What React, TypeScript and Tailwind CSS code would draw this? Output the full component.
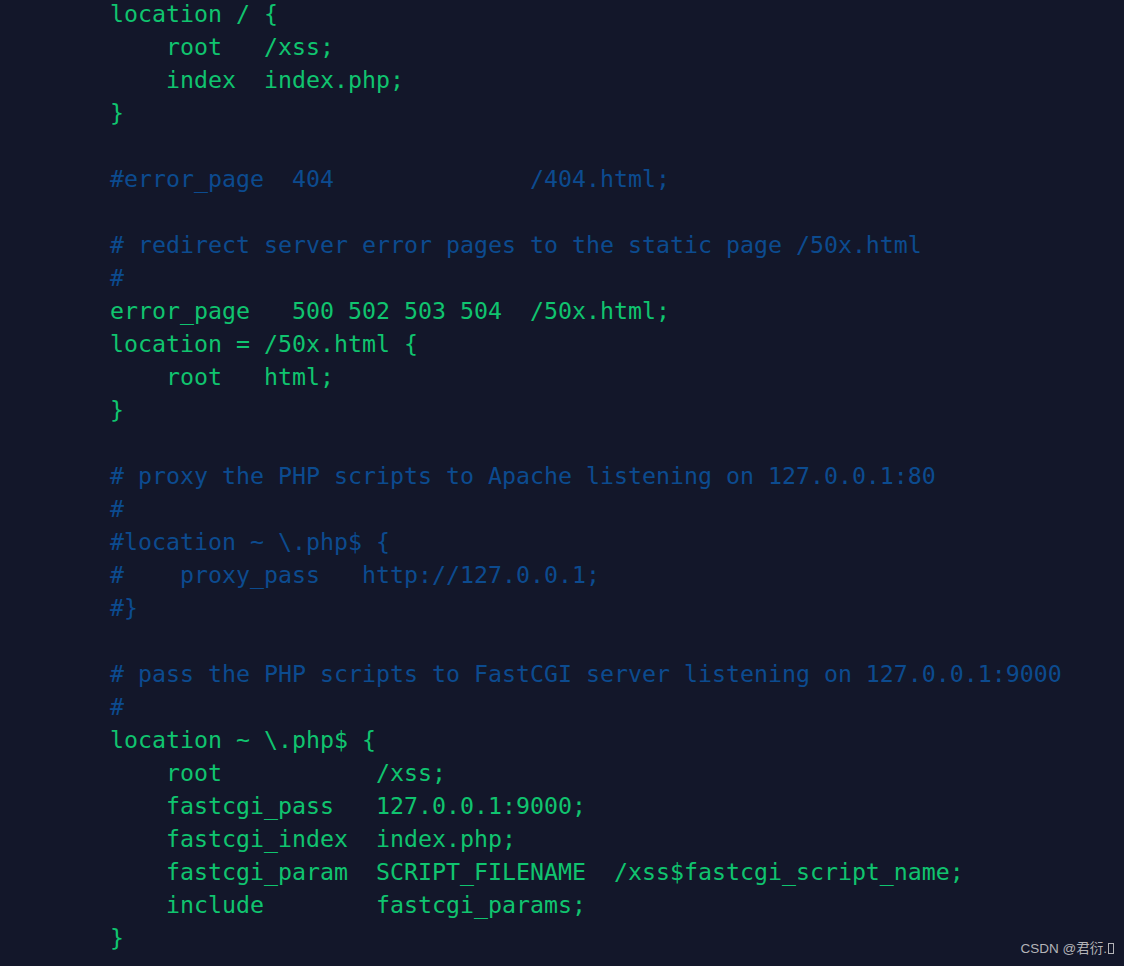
import React from "react";

const G = "text-[#10c46f]";
const C = "text-[#0c4b8f]";

const lines: [string, string][] = [
  ["location / {", G],
  ["    root   /xss;", G],
  ["    index  index.php;", G],
  ["}", G],
  ["", G],
  ["#error_page  404              /404.html;", C],
  ["", G],
  ["# redirect server error pages to the static page /50x.html", C],
  ["#", C],
  ["error_page   500 502 503 504  /50x.html;", G],
  ["location = /50x.html {", G],
  ["    root   html;", G],
  ["}", G],
  ["", G],
  ["# proxy the PHP scripts to Apache listening on 127.0.0.1:80", C],
  ["#", C],
  ["#location ~ \\.php$ {", C],
  ["#    proxy_pass   http://127.0.0.1;", C],
  ["#}", C],
  ["", G],
  ["# pass the PHP scripts to FastCGI server listening on 127.0.0.1:9000", C],
  ["#", C],
  ["location ~ \\.php$ {", G],
  ["    root           /xss;", G],
  ["    fastcgi_pass   127.0.0.1:9000;", G],
  ["    fastcgi_index  index.php;", G],
  ["    fastcgi_param  SCRIPT_FILENAME  /xss$fastcgi_script_name;", G],
  ["    include        fastcgi_params;", G],
  ["}", G],
];

export default function App() {
  return (
    <div className="relative w-[1124px] h-[966px] overflow-hidden bg-[#13172a]">
      <div className="pl-[110px] -mt-[3px] font-['DejaVu_Sans_Mono',monospace] text-[23.25px] leading-[33px] whitespace-pre">
        {lines.map(([t, c], i) => (
          <div key={i} className={`${c} h-[33px]`}>
            {t}
          </div>
        ))}
      </div>
      <div className="absolute right-[10px] bottom-[7px] flex items-center text-[13.5px] text-[#b4b4b8] font-['Liberation_Sans','Noto_Sans_CJK_SC',sans-serif]">
        <span>CSDN @君衍.</span>
        <span className="ml-[1px] inline-block w-[6px] h-[11px] border border-[#b4b4b8]" />
      </div>
    </div>
  );
}
